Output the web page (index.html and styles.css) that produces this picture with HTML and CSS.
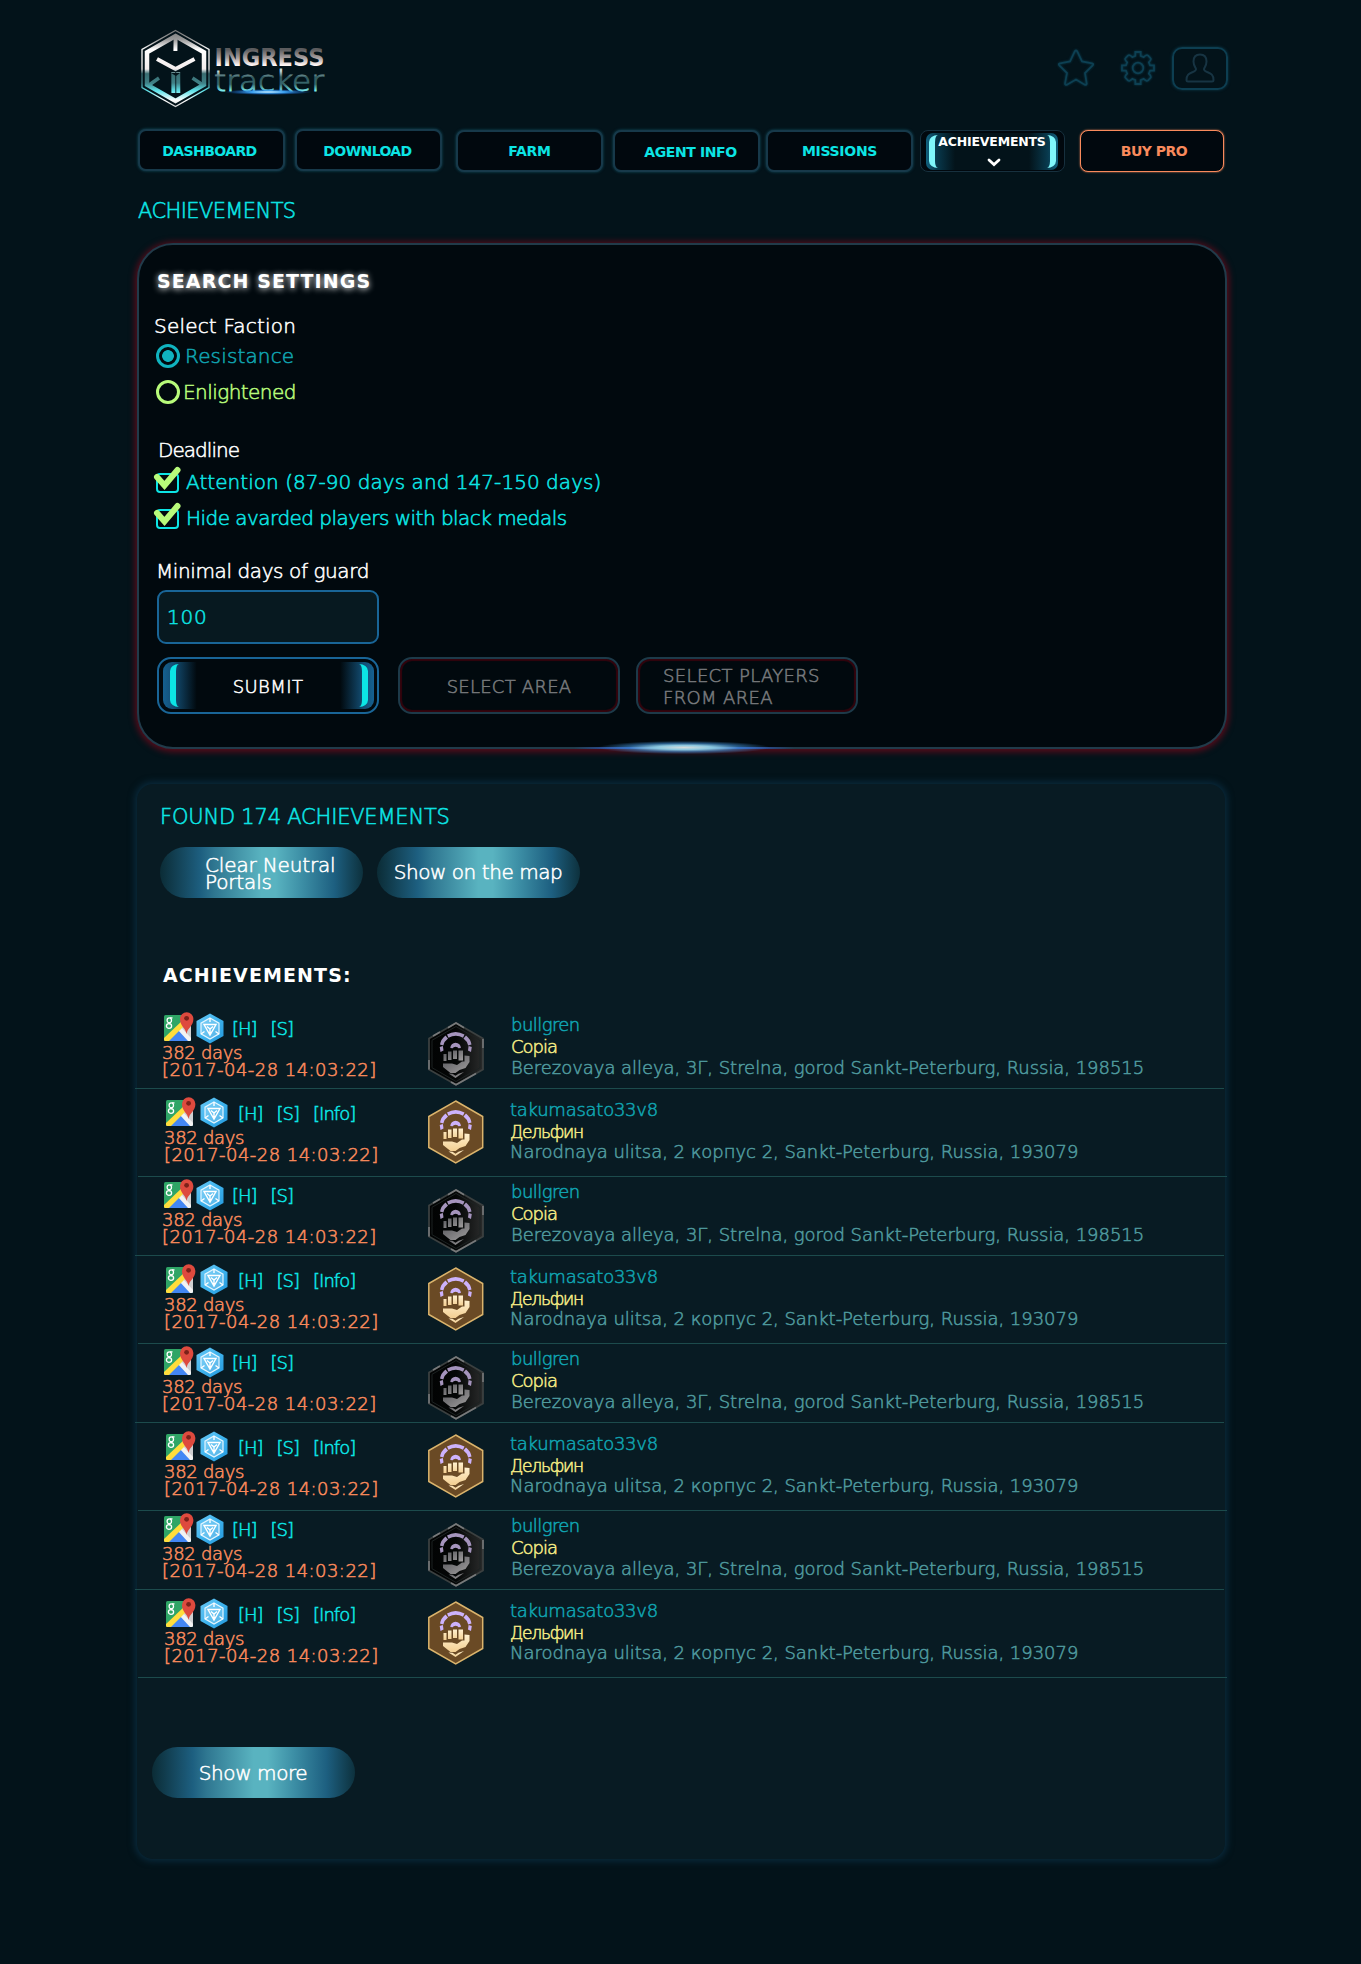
FILE: index.html
```html
<!DOCTYPE html>
<html lang="en">
<head>
<meta charset="utf-8">
<title>Ingress Tracker - Achievements</title>
<link rel="stylesheet" href="styles.css">
</head>
<body>
<svg class="defs" width="0" height="0">
  <defs>
    <linearGradient id="fistGold" x1="0" y1="0" x2="0" y2="1"><stop offset="0" stop-color="#fff0cf"/><stop offset="1" stop-color="#f3cf92"/></linearGradient>
    <linearGradient id="fistGrey" x1="0" y1="0" x2="1" y2="1"><stop offset="0" stop-color="#55555a"/><stop offset="1" stop-color="#a09e9e"/></linearGradient>
    <linearGradient id="blackHex" x1="0" y1="0" x2="1" y2="0"><stop offset="0" stop-color="#020303"/><stop offset=".5" stop-color="#040606"/><stop offset="1" stop-color="#2a2b2b"/></linearGradient>
    <linearGradient id="portal" x1="0" y1="0" x2="1" y2="1"><stop offset="0" stop-color="#69c8f5"/><stop offset=".5" stop-color="#3fb4ee"/><stop offset="1" stop-color="#2397dc"/></linearGradient>
    <clipPath id="mapClip"><rect x="0" y="3" width="27" height="26" rx="1.5"/></clipPath>
  </defs>
  <symbol id="maps" viewBox="0 0 30 30">
    <g clip-path="url(#mapClip)">
      <rect y="3" width="27" height="26" fill="#2fa566"/>
      <path d="M27 10v19L14 16z" fill="#cfd0d2"/>
      <path d="M0 29l14-13 13 13z" fill="#4387f4"/>
      <path d="M13 17l3-3 11 12v3h-3z" fill="#f3f3f3"/>
      <path d="M-1 27L20 7l3 4L4 30h-5z" fill="#ffdd3c"/>
    </g>
    <g fill="none" stroke="#fff" stroke-width="1.300"><ellipse cx="5.300" cy="8.300" rx="2.200" ry="2.500"/><ellipse cx="5" cy="14" rx="2.600" ry="2.300"/><path d="M6 5.800h2.500M6 10.500q-1 .8 0 1.600"/></g>
    <path d="M22.500 22c-.8-6-6.500-8-6.500-15a6.700 6.700 0 0 1 13.400 0c0 7-6.100 9-6.900 15z" fill="#de4a3e"/>
    <circle cx="22.600" cy="6.300" r="2.400" fill="#7c2119"/>
  </symbol>
  <symbol id="portalhex" viewBox="0 0 28 31">
    <path d="M14 .5l13.500 7.500v15L14 30.500.5 23V8z" fill="url(#portal)"/>
    <path d="M14 5l9 5.200v10.600L14 26l-9-5.200V10.200z" fill="#ffffff33" stroke="#e4f6ff" stroke-width="1.200"/>
    <path d="M8 11.500h12L14 22zM11 13.500l3 2.500 3-2.500M14 16v5M14 5v4M5 21l3.500-2.500M23 21l-3.500-2.500" fill="none" stroke="#fff" stroke-width="1.400"/>
  </symbol>
  <symbol id="arcs" viewBox="0 0 56 64">
    <path d="M12.500 30l-.8-5 3.200-1 .6 4.500zM12 22.500q1-5.500 5.500-9l2.500 3q-3.500 2.500-4.700 7zM19 12.500q8.500-5 17.500 0l-1.500 3.300q-7-4-14.500 0zM38 13.500q4.500 3.500 5.500 9l-3.300 1q-1.200-4.500-4.700-7zM43 30l.8-5-3.200-1-.6 4.500z"/>
    <path d="M22.300 26a5.300 5.300 0 0 1 10.600 0l-2.400.3a3 2.200 0 0 0-5.800 0z"/>
  </symbol>
  <symbol id="fist" viewBox="0 0 56 64">
    <path d="M15.500 32h3v7h-3zM20 29.500h3.500V38H20zM25 28.500h4V37h-4zM30.500 28.500h4.500v10h-4.500z"/>
    <path d="M36.500 33.500l5 .5v6l-4 6-6 2-4 3h-5l-7.500-6v-3.500h9l5 1.500 5-3.500h2.500z"/>
    <path d="M20.500 51.500l4 .3 3 2 3-2 5.500-1.800-8.500 6z"/>
  </symbol>
  <symbol id="gold" viewBox="0 0 56 64">
    <path d="M27.700 1l27 15.500v31L27.700 62.800.8 47.500v-31z" fill="#6a4a25" stroke="#dbb46c" stroke-width="1.500"/>
    <use href="#arcs" width="56" height="64" fill="#cdb2fb"/>
    <use href="#fist" width="56" height="64" fill="url(#fistGold)"/>
  </symbol>
  <symbol id="black" viewBox="0 0 56 64">
    <path d="M28 1l27 15.500v31L28 62.800 1 47.500v-31z" fill="url(#blackHex)" stroke="#3b4040" stroke-width="1.800"/>
    <path d="M28 4.500l24 13.800v27.400L28 59.500 4 45.700V18.300z" fill="none" stroke="#1c2222" stroke-width="1"/>
    <path d="M1 47.500V38M20 5.800L28 1l8 4.800M55 17v9M48 51.500l-20 11.300-5-2.800M5 14l7-4" fill="none" stroke="#77797a" stroke-width="1.600"/>
    <use href="#arcs" width="56" height="64" fill="#a594bd"/>
    <use href="#fist" width="56" height="64" fill="url(#fistGrey)"/>
  </symbol>
  <symbol id="tick" viewBox="0 0 28 28">
    <rect x="4" y="9" width="21" height="18" rx="3" fill="none" stroke="#0ce5e5" stroke-width="2"/>
    <path d="M4 12l7.500 8.500L24.500 5" fill="none" stroke="#b8fb7a" stroke-width="6" stroke-linecap="round"/>
  </symbol>
</svg>

<div class="page">
  <header class="top">
    <svg class="logo" viewBox="0 0 200 84" width="200" height="84">
      <defs>
        <linearGradient id="chrome" gradientUnits="userSpaceOnUse" x1="0" y1="2" x2="0" y2="80"><stop offset="0" stop-color="#777"/><stop offset=".12" stop-color="#999"/><stop offset=".25" stop-color="#fff"/><stop offset=".5" stop-color="#f4eded"/><stop offset=".56" stop-color="#396c70"/><stop offset=".68" stop-color="#3f8086"/><stop offset=".78" stop-color="#5fe3ea"/><stop offset=".9" stop-color="#fff"/><stop offset="1" stop-color="#ccc"/></linearGradient>
        <linearGradient id="word1" x1="0" y1="0" x2="0" y2="1"><stop offset=".2" stop-color="#5c5c5e"/><stop offset=".5" stop-color="#a79f9f"/><stop offset=".75" stop-color="#fff6f4"/></linearGradient>
        <linearGradient id="word2" x1="0" y1="0" x2="0" y2="1"><stop offset=".2" stop-color="#c8dede"/><stop offset=".38" stop-color="#335a60"/><stop offset=".6" stop-color="#37676c"/><stop offset=".8" stop-color="#7ff3f5"/></linearGradient>
        <radialGradient id="flare"><stop offset="0" stop-color="#d8f4ff"/><stop offset=".4" stop-color="#3a9ff0"/><stop offset="1" stop-color="#0a50c0" stop-opacity="0"/></radialGradient>
      </defs>
      <g fill="none" stroke="url(#chrome)">
        <path d="M37.500 2.500l33.500 19v38L37.500 78.500 4 59.500v-38z" stroke-width="1.300"/>
        <path d="M37.500 8l28.500 16.200v32.600L37.500 73 9 56.800V24.200z" stroke-width="4.500"/>
        <path d="M37.600 10l-.2 13M19 31l18.500 10L56.500 31" stroke-width="4"/>
        <path d="M21 50L11 57M54.500 50L65 57" stroke-width="3.500"/>
        <path d="M35.300 44l.1 21M40.200 44l.1 21" stroke-width="4"/>
      </g>
      <path d="M33 45h9l-4 3z" fill="#04141a"/>
      <text class="logo-a" x="76.500" y="38" textLength="110" lengthAdjust="spacingAndGlyphs" fill="url(#word1)">INGRESS</text>
      <text class="logo-b" x="76" y="62.500" textLength="110" lengthAdjust="spacingAndGlyphs" fill="url(#word2)">tracker</text>
      <ellipse cx="130" cy="64" rx="44" ry="3" fill="url(#flare)"/>
    </svg>
    <div class="tools">
      <svg viewBox="0 0 40 40" width="40" height="40"><path d="M20 2.500q1 0 1.500 1.500l4.500 9.500 10 1.800q2 .6.700 2L29 25l1.700 10.500q0 2-2 1.200L20 31.500l-9 5.200q-2 .8-2-1.200L11 25l-7.700-7.700q-1.300-1.400.7-2l10-1.800L18.500 4q.5-1.500 1.500-1.500z"/></svg>
      <svg viewBox="0 0 36 36" width="36" height="36"><circle cx="18" cy="18" r="5.300"/><path d="M15.300 2h5.400v4l3 1.200q3-3 4.200-1.700l2.600 2.600q1.300 1.200-1.700 4.200l1.200 3h4v5.400h-4l-1.200 3q3 3 1.700 4.200l-2.600 2.600q-1.200 1.300-4.200-1.700l-3 1.200v4h-5.400v-4l-3-1.200q-3 3-4.200 1.700l-2.600-2.600q-1.300-1.200 1.700-4.200l-1.200-3H2v-5.400h4l1.200-3q-3-3-1.700-4.200l2.600-2.600q1.200-1.300 4.200 1.700l3-1.200z"/></svg>
      <div class="user"><svg viewBox="0 0 30 30" width="30" height="30"><path d="M15 1.500c4 0 6.500 2.500 6.500 7 0 3.500-1.300 5-2.300 6.800-.8 1.700.6 2.700 3 3.700 4 1.500 6.300 3 6.300 8 0 1-.5 1.500-1.500 1.500H3c-1 0-1.500-.5-1.500-1.500 0-5 2.300-6.500 6.300-8 2.400-1 3.800-2 3-3.700C9.800 13.500 8.500 12 8.500 8.500c0-4.500 2.500-7 6.500-7z"/></svg></div>
    </div>
  </header>

  <nav class="nav">
    <a class="btn b1">DASHBOARD</a>
    <a class="btn b2">DOWNLOAD</a>
    <a class="btn b3">FARM</a>
    <a class="btn b4">AGENT INFO</a>
    <a class="btn b5">MISSIONS</a>
    <a class="btn active"><span class="lit"><span class="lit-text">ACHIEVEMENTS</span><svg viewBox="0 0 14 9" width="14" height="9"><path d="M2 2l5 4.500L12 2"/></svg></span></a>
    <a class="btn pro">BUY PRO</a>
  </nav>

  <h1 class="crumb">ACHIEVEMENTS</h1>

  <section class="search">
    <h2 class="heading glow">SEARCH SETTINGS</h2>
    <div class="label faction">Select Faction</div>
    <div class="option"><span class="radio on"></span><span class="res">Resistance</span></div>
    <div class="option second"><span class="radio"></span><span class="enl">Enlightened</span></div>
    <div class="label deadline">Deadline</div>
    <div class="option check"><svg width="28" height="28"><use href="#tick"/></svg><span class="att">Attention (87-90 days and 147-150 days)</span></div>
    <div class="option check second"><svg width="28" height="28"><use href="#tick"/></svg><span class="hide">Hide avarded players with black medals</span></div>
    <div class="label minimal">Minimal days of guard</div>
    <div class="field">100</div>
    <div class="actions">
      <div class="act submit"><span class="lit">SUBMIT</span></div>
      <div class="act area">SELECT AREA</div>
      <div class="act players"><span>SELECT PLAYERS<br>FROM AREA</span></div>
    </div>
    <i class="flare"></i>
  </section>

  <section class="results">
    <h2 class="found">FOUND 174 ACHIEVEMENTS</h2>
    <div class="pills">
      <div class="pill clear"><span>Clear Neutral<br>Portals</span></div>
      <div class="pill map">Show on the map</div>
    </div>
    <h2 class="heading list-title">ACHIEVEMENTS:</h2>
    <div class="list" id="list"></div>
    <div class="pill more">Show more</div>
  </section>
</div>
<script src="list.js"></script>
</body>
</html>
```
FILE: styles.css
```css
* { box-sizing: border-box; }
body {
  margin: 0;
  height: 1964px;
  background: #03131a;
  font-family: "DejaVu Sans", sans-serif;
  font-weight: 200;
  font-size: 20px;
  line-height: 24px;
  color: #fff;
  -webkit-text-stroke: .55px;
  white-space: nowrap;
}
h1, h2 { margin: 0; font-size: inherit; font-weight: inherit; }
.defs { position: absolute; }
.page { width: 1090px; margin-left: 137px; }

/* header */
.top { display: flex; justify-content: space-between; height: 130px; padding-top: 28px; }
.logo { margin-left: 1px; }
.logo-a { font: 700 24px "DejaVu Sans", sans-serif; -webkit-text-stroke: 0; }
.logo-b { font: 200 28px "DejaVu Sans", sans-serif; -webkit-text-stroke: 0; stroke: url(#word2); stroke-width: .8px; }
.tools { display: flex; align-items: center; height: 80px; }
.tools svg { fill: none; stroke: #0d4053; stroke-width: 1.800; filter: drop-shadow(0 0 1px #0b3a4b); }
.tools svg + svg { margin: 0 16px 0 24px; }
.user { display: flex; align-items: center; justify-content: center; width: 56px; height: 43px; border: 2px solid #0d3e51; border-radius: 10px; box-shadow: 0 0 3px #0c3c4d; margin-right: -1px; }
.user svg { stroke: #173443; stroke-width: 2; filter: none; }

.nav { display: flex; height: 43px; padding-left: 1px; }
.btn {
  display: flex; align-items: center; justify-content: center;
  width: 147px; height: 42px;
  border: 2px solid #17394a; border-radius: 8px;
  background: #01080e; box-shadow: 0 0 3px #125060;
  color: #0ce5e5; font-weight: 700; font-size: 14px; line-height: 16px;
  -webkit-text-stroke: 0;
}
.b1 { margin-top: -1px; padding: 2px 4px 0 0; letter-spacing: -.6px; }
.b2 { margin: -1px 14px 0 10px; padding: 2px 2px 0 0; letter-spacing: -.6px; }
.b3 { letter-spacing: -.3px; }
.b4 { margin-left: 10px; padding: 2px 0 0 8px; letter-spacing: -.4px; }
.b5 { margin-left: 6px; letter-spacing: -.3px; }
.active { width: 145px; margin-left: 7px; border: 1px solid #17303e; box-shadow: none; justify-content: flex-start; padding-left: 5px; }
.lit { position: relative; display: flex; align-items: center; }
.active .lit {
  flex-direction: column; width: 132px; height: 37px; border-radius: 7px;
  background: linear-gradient(90deg, #11607e, #08394d 8%, #03131a 22%, #03131a 78%, #08394d 92%, #11607e);
  color: #fff; font-size: 12.500px; letter-spacing: -.2px; justify-content: space-between; padding: 1px 0 3px;
}
.active .lit svg { fill: none; stroke: #fff; stroke-width: 2.800; stroke-linecap: round; margin-left: 3px; }
.lit::before, .lit::after { content: ""; position: absolute; top: 2px; bottom: 2px; width: 9px; }
.lit::before { left: 3px; border-left: 6px solid #7ff6fb; border-radius: 9px 0 0 9px / 7px 0 0 7px; }
.lit::after { right: 2px; border-right: 6px solid #7ff6fb; border-radius: 0 9px 9px 0 / 0 7px 7px 0; }
.lit-text { line-height: 15px; }
.pro { width: 144px; margin-left: 15px; border: 1.500px solid #f98a5c; box-shadow: 0 0 2px #f98a5c; color: #f98a5c; padding-left: 4px; letter-spacing: -.5px; }

.crumb { margin: 26px 0 0 1px; font-size: 21px; color: #0ce5e5; letter-spacing: -.6px; }

/* search panel */
.search {
  position: relative; height: 506px; margin-top: 20px; padding: 24px 0 0 18px;
  background: #01090e; border: 2px solid #213b4a; border-radius: 36px; box-shadow: 0 1px 6px 2px #5a0b1a;
}
.heading { font-size: 19px; font-weight: 700; -webkit-text-stroke: 0; letter-spacing: 1.100px; }
.glow { text-shadow: 0 1px 6px #fff; }
.faction { margin: 21px 0 6px -3px; letter-spacing: .2px; }
.option { display: flex; height: 24px; }
.second { margin-top: 12px; }
.radio { width: 24px; height: 24px; border: 3px solid #b8fb7a; border-radius: 50%; margin-left: -1px; }
.radio.on { border-color: #10b3bf; background: radial-gradient(circle, #10b3bf 5.500px, transparent 6.200px); }
.res { margin-left: 5px; color: #10a3b0; letter-spacing: .15px; }
.enl { margin-left: 3px; color: #b8fb7a; letter-spacing: -.55px; }
.deadline { margin: 34px 0 8px 1px; letter-spacing: -.95px; }
.check { color: #0ce5e5; }
.check svg { margin: -5px 4px 0 -4px; }
.att { margin-left: 1px; letter-spacing: .05px; }
.hide { margin-left: 1px; letter-spacing: -.53px; }
.minimal { margin-top: 29px; margin-left: -1px; letter-spacing: -.4px; }
.field { width: 222px; height: 54px; margin-top: 7px; padding: 13px 8px; border: 2px solid #196597; border-radius: 9px; background: #071920; color: #0ce5e5; letter-spacing: .8px; }
.actions { display: flex; margin-top: 13px; font-size: 18px; line-height: 22px; }
.act { display: flex; align-items: center; justify-content: center; width: 222px; height: 57px; border: 2px solid #1d3a49; border-radius: 14px; color: #77797c; box-shadow: inset 0 0 1px 2px #33040d; padding-top: 3px; }
.submit { border-color: #196597; box-shadow: none; color: #fff; padding: 0; letter-spacing: .4px; }
.submit .lit { justify-content: center; width: 211px; height: 47px; padding-top: 3px; border-radius: 9px; background: linear-gradient(90deg, #156090, #134e74 5%, #01090e 16%, #01090e 84%, #134e74 95%, #156090); }
.submit .lit::before, .submit .lit::after { width: 12px; border-color: #0ce5e5; }
.submit .lit::before { left: 7px; }
.submit .lit::after { right: 6px; }
.area { margin: 0 16px 0 19px; letter-spacing: .25px; }
.players { justify-content: flex-start; padding-left: 25px; letter-spacing: .35px; }
.flare { position: absolute; left: 435px; bottom: -9px; width: 220px; height: 17px; background: radial-gradient(closest-side, #d5dcda 0, #8cc8e0 25%, #3b82c0aa 50%, transparent 78%), linear-gradient(90deg, transparent, #3358c8, #fff, #3358c8, transparent) center / 100% 2px no-repeat; }

/* results panel */
.results { height: 1075px; margin-top: 35px; width: 1088px; padding-top: 21px; border-radius: 16px; background: #081b23; box-shadow: 0 0 7px 2px #0a2c3f; }
.found { margin-left: 23px; font-size: 21px; color: #0ce5e5; letter-spacing: -.2px; }
.pills { display: flex; gap: 14px; margin: 18px 0 0 23px; }
.pill {
  display: flex; align-items: center; justify-content: center; width: 203px; height: 51px; border-radius: 26px;
  background: linear-gradient(90deg, #0b2c36, #1d5f80 20%, #2f7791 27%, #59b3c0 50%, #59b3c0 57%, #3c8ea5 70%, #1d5f80 86%, #0d313d);
}
.clear { justify-content: flex-start; padding: 3px 0 0 45px; line-height: 17px; letter-spacing: -.15px; }
.map { letter-spacing: -.45px; padding: 0 1px 2px 0; }
.more { margin: 69px 0 0 15px; letter-spacing: -.4px; padding-right: 1px; }
.list-title { margin: 65px 0 23px 26px; }

.row { display: flex; height: 79px; width: 1089px; margin-left: -2px; padding-left: 27px; border-bottom: 1px solid #1c4b4c; font-size: 18px; line-height: 22px; }
.row.even { height: 88px; margin-left: 1px; padding: 6px 0 0 26px; }
.when { width: 266px; color: #f98a5c; line-height: 17px; }
.links { display: flex; height: 34px; padding: 2px 0 0 2px; color: #0ce5e5; line-height: 22px; letter-spacing: -1px; }
.links span { margin: 6px 14px 0 0; }
.links .h { margin-left: 8px; }
.hexi { margin: 1px 0 0 2px; }
.even .hexi { margin: 0 0 0 4px; }
.even .h { margin-left: 10px; }
.days { letter-spacing: -.3px; }
.date { letter-spacing: .45px; }
.badge { margin: 12px 0 0; flex: none; }
.even .badge { margin: 5px 0 0 -2px; }
.who { padding: 4px 0 0 27px; }
.even .who { padding-left: 26px; }
.agent { color: #10a3b0; letter-spacing: -.55px; }
.portal { color: #f4ea84; height: 21px; letter-spacing: -1px; }
.addr { color: #4f9a9e; letter-spacing: -.04px; }
.even .agent { letter-spacing: -.25px; }
.even .portal { font-size: 17px; letter-spacing: -1.200px; }
.even .addr { margin-top: -1px; letter-spacing: -.03px; }
```
FILE: list.js
```
const entries = [
  { cls: "odd", badge: "black", links: ["[H]", "[S]"], agent: "bullgren", portal: "Copia",
    addr: "Berezovaya alleya, 3Г, Strelna, gorod Sankt-Peterburg, Russia, 198515" },
  { cls: "even", badge: "gold", links: ["[H]", "[S]", "[Info]"], agent: "takumasato33v8", portal: "Дельфин",
    addr: "Narodnaya ulitsa, 2 корпус 2, Sankt-Peterburg, Russia, 193079" }
];

const row = e => `
  <div class="row ${e.cls}">
    <div class="when">
      <div class="links">
        <svg width="30" height="30"><use href="#maps"/></svg>
        <svg class="hexi" width="28" height="31"><use href="#portalhex"/></svg>
        ${e.links.map((l, i) => `<span class="${i ? "" : "h"}">${l}</span>`).join("")}
      </div>
      <div class="days">382 days</div>
      <div class="date">[2017-04-28 14:03:22]</div>
    </div>
    <svg class="badge" width="56" height="64"><use href="#${e.badge}"/></svg>
    <div class="who">
      <div class="agent">${e.agent}</div>
      <div class="portal">${e.portal}</div>
      <div class="addr">${e.addr}</div>
    </div>
  </div>`;

document.getElementById("list").innerHTML =
  Array.from({ length: 8 }, (_, i) => row(entries[i % 2])).join("");
```
